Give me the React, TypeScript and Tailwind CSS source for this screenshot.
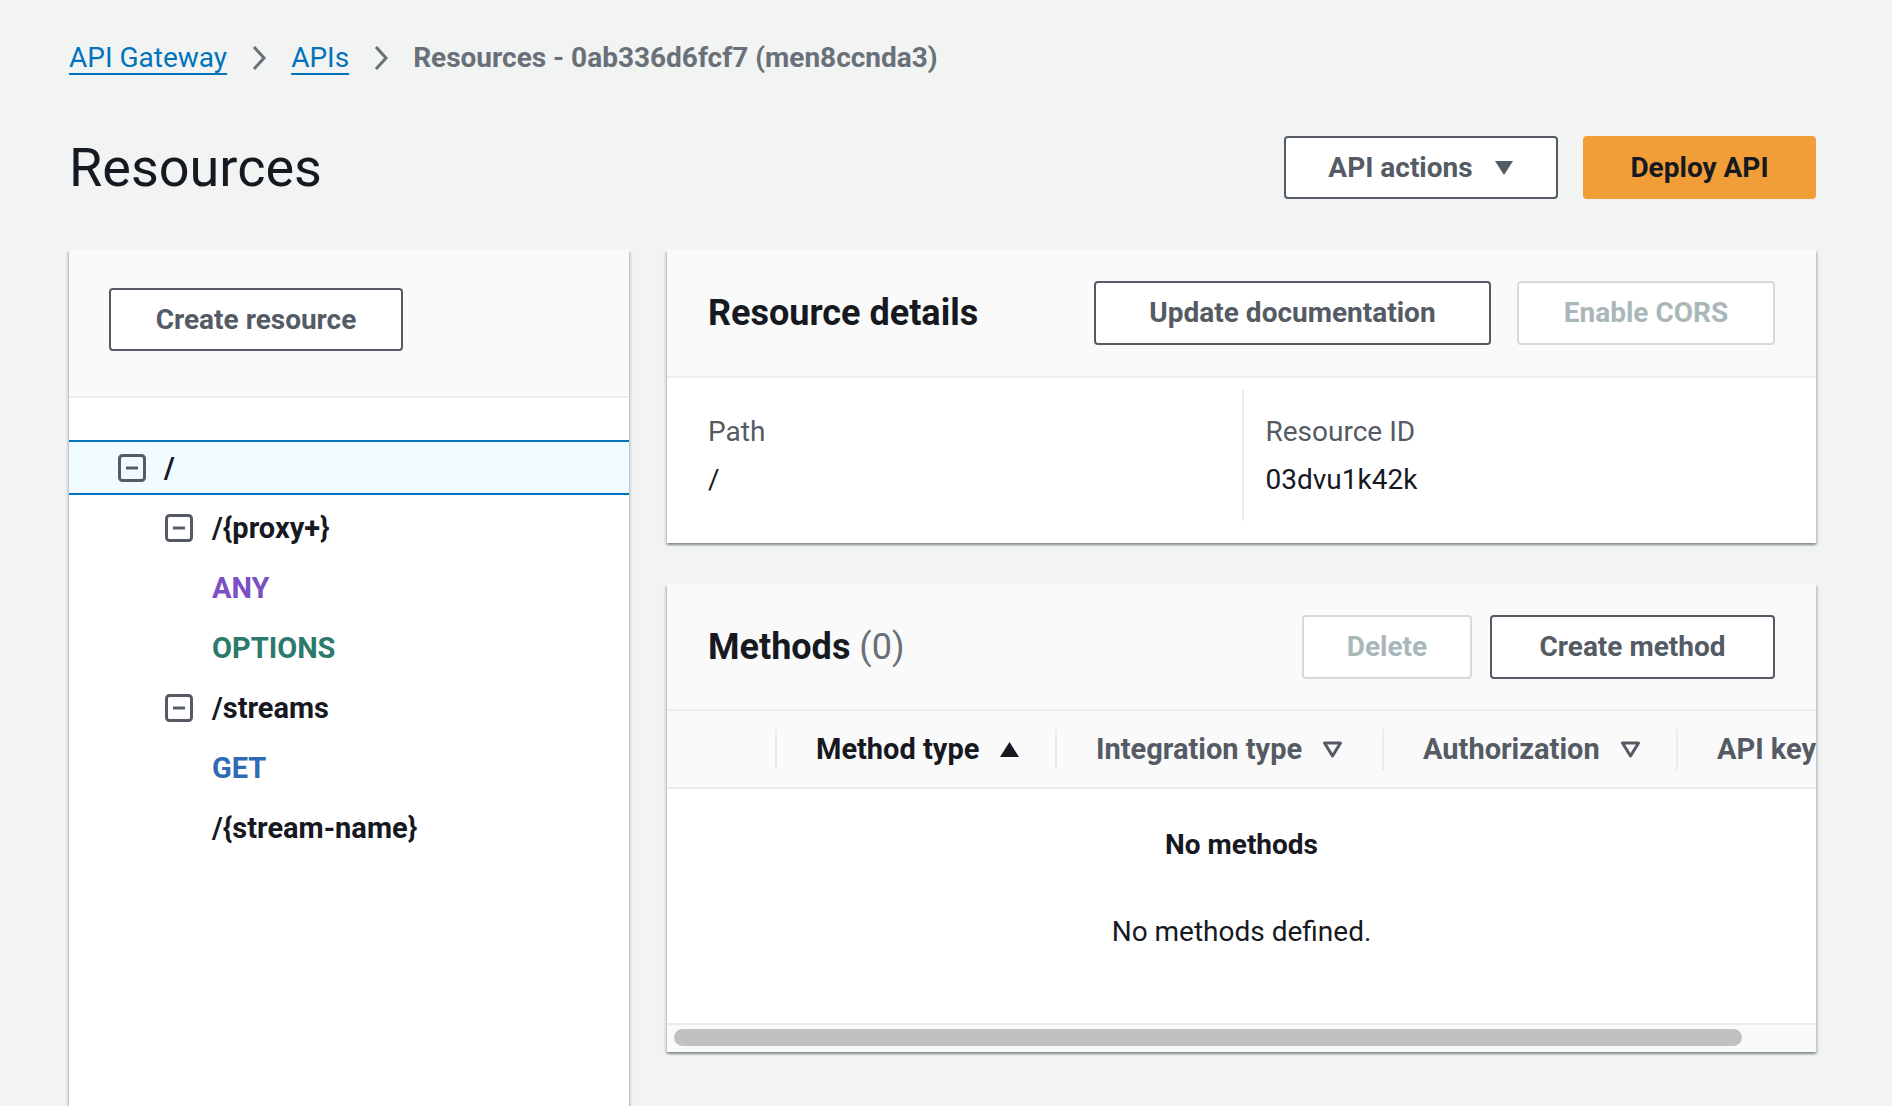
function Chevron() {
  return (
    <svg width="18" height="28" viewBox="0 0 18 28" fill="none" className="shrink-0">
      <path d="M4 3l10 11L4 25" stroke="#687078" strokeWidth="3" />
    </svg>
  );
}

function Caret() {
  return (
    <svg width="20" height="16" viewBox="0 0 20 16" className="shrink-0">
      <path d="M1 1h18L10 15z" fill="#545b64" />
    </svg>
  );
}

function SortUp() {
  return (
    <svg width="21" height="17" viewBox="0 0 21 17" className="shrink-0">
      <path d="M10.5 1L20 16H1z" fill="#16191f" />
    </svg>
  );
}

function SortDown() {
  return (
    <svg width="21" height="17" viewBox="0 0 21 17" fill="none" className="shrink-0">
      <path d="M2.5 2h16L10.5 15z" stroke="#545b64" strokeWidth="3" strokeLinejoin="round" />
    </svg>
  );
}

function Collapse() {
  return (
    <svg width="28" height="28" viewBox="0 0 28 28" fill="none" className="shrink-0">
      <rect x="1.5" y="1.5" width="25" height="25" rx="3" stroke="#545b64" strokeWidth="3" />
      <path d="M8 14h12" stroke="#545b64" strokeWidth="3" />
    </svg>
  );
}

function Button({ children, width, disabled }: { children: React.ReactNode; width: string; disabled?: boolean }) {
  return (
    <button
      className={
        "h-[64px] rounded-[4px] border-2 bg-white text-[28px] font-bold flex items-center justify-center " +
        width +
        (disabled ? " border-[#d5dbdb] text-[#aab7b8]" : " border-[#545b64] text-[#545b64]")
      }
    >
      {children}
    </button>
  );
}

function HeaderCell({ label, width, active }: { label: string; width: string; active?: boolean }) {
  return (
    <div className={"flex items-center shrink-0 " + width}>
      <div className="h-[41px] w-[2px] bg-[#eaeded]" />
      <span className={"pl-[39px] whitespace-nowrap " + (active ? "text-[#16191f]" : "text-[#545b64]")}>{label}</span>
      {label !== "API key" && <span className="ml-[20px]">{active ? <SortUp /> : <SortDown />}</span>}
    </div>
  );
}

const card =
  "bg-white shadow-[0_2px_2px_0_rgba(0,28,36,0.3),2px_2px_2px_0_rgba(0,28,36,0.12),-2px_2px_2px_0_rgba(0,28,36,0.12)]";

export default function App() {
  return (
    <div className="min-h-[1106px] h-[1106px] overflow-hidden bg-[#f2f3f3] pl-[69px] pr-[76px] text-[#16191f] [font-family:Roboto,'Noto_Sans',sans-serif]">
      {/* breadcrumb */}
      <nav className="pt-[38px] h-[78px] flex items-center gap-[23px] text-[28px] leading-[40px]">
        <a className="text-[#0073bb] underline decoration-2 underline-offset-[6px]">API Gateway</a>
        <Chevron />
        <a className="text-[#0073bb] underline decoration-2 underline-offset-[6px]">APIs</a>
        <Chevron />
        <span className="font-bold text-[#687078]">Resources - 0ab336d6fcf7 (men8ccnda3)</span>
      </nav>

      {/* page header */}
      <div className="mt-[58px] h-[63px] flex items-center justify-between">
        <h1 className="text-[54px] leading-[63px] font-normal">Resources</h1>
        <div className="flex items-center gap-[25px]">
          <button className="h-[63px] w-[274px] rounded-[4px] border-2 border-[#545b64] bg-white text-[28px] font-bold text-[#545b64] flex items-center justify-center gap-[21px]">
            API actions
            <Caret />
          </button>
          <button className="h-[63px] w-[233px] rounded-[4px] bg-[#f19e39] text-[28px] font-bold text-[#16191f]">
            Deploy API
          </button>
        </div>
      </div>

      <div className="mt-[51px] flex gap-[38px] items-start">
        {/* resource tree */}
        <aside className={"w-[560px] h-[900px] shrink-0 " + card}>
          <div className="h-[148px] bg-[#fafafa] border-b-2 border-[#eaeded] pl-[40px] pt-[38px]">
            <Button width="w-[294px] !h-[63px]">Create resource</Button>
          </div>
          <div className="pt-[42px] text-[29px] font-bold leading-[40px]">
            <div className="h-[55px] mb-[3px] border-y-2 border-[#0073bb] bg-[#f1faff] flex items-center pl-[49px] gap-[18px]">
              <Collapse />
              <span>/</span>
            </div>
            <div className="h-[60px] flex items-center pl-[96px] gap-[19px]">
              <Collapse />
              <span>/{"{proxy+}"}</span>
            </div>
            <div className="h-[60px] flex items-center pl-[143px] text-[#7d4fc4]">ANY</div>
            <div className="h-[60px] flex items-center pl-[143px] text-[#2b7a6b]">OPTIONS</div>
            <div className="h-[60px] flex items-center pl-[96px] gap-[19px]">
              <Collapse />
              <span>/streams</span>
            </div>
            <div className="h-[60px] flex items-center pl-[143px] text-[#2e6bb3]">GET</div>
            <div className="h-[60px] flex items-center pl-[143px]">/{"{stream-name}"}</div>
          </div>
        </aside>

        <div className="flex-1 min-w-0 flex flex-col gap-[41px]">
          {/* resource details */}
          <section className={card}>
            <div className="h-[128px] bg-[#fafafa] border-b-2 border-[#eaeded] flex items-center justify-between px-[41px]">
              <h2 className="text-[36px] font-bold leading-[44px]">Resource details</h2>
              <div className="flex items-center gap-[26px]">
                <Button width="w-[397px]">Update documentation</Button>
                <Button width="w-[258px]" disabled>
                  Enable CORS
                </Button>
              </div>
            </div>
            <div className="grid grid-cols-2 px-[41px] pt-[12px] pb-[22px] text-[28px] leading-[40px]">
              <div className="h-[131px] pt-[22px]">
                <div className="text-[#545b64]">Path</div>
                <div className="mt-[8px]">/</div>
              </div>
              <div className="h-[131px] pt-[22px] pl-[22px] border-l-2 border-[#eaeded]">
                <div className="text-[#545b64]">Resource ID</div>
                <div className="mt-[8px]">03dvu1k42k</div>
              </div>
            </div>
          </section>

          {/* methods */}
          <section className={"overflow-hidden " + card}>
            <div className="h-[127px] bg-[#fafafa] border-b-2 border-[#eaeded] flex items-center justify-between px-[41px]">
              <h2 className="text-[36px] font-bold leading-[44px]">
                Methods <span className="font-normal text-[#687078]">(0)</span>
              </h2>
              <div className="flex items-center gap-[18px]">
                <Button width="w-[170px]" disabled>
                  Delete
                </Button>
                <Button width="w-[285px]">Create method</Button>
              </div>
            </div>
            <div className="h-[78px] bg-[#fafafa] border-b-2 border-[#eaeded] flex items-center text-[29px] font-bold leading-[40px] overflow-hidden">
              <div className="w-[108px] shrink-0" />
              <HeaderCell label="Method type" width="w-[280px]" active />
              <HeaderCell label="Integration type" width="w-[327px]" />
              <HeaderCell label="Authorization" width="w-[294px]" />
              <HeaderCell label="API key" width="w-[200px]" />
            </div>
            <div className="h-[234px] text-center text-[28px] leading-[40px] pt-[36px]">
              <div className="font-bold">No methods</div>
              <div className="mt-[47px]">No methods defined.</div>
            </div>
            <div className="h-[29px] border-t-2 border-[#eaeded] bg-[#fafafa] pl-[7px] pt-[4px]">
              <div className="h-[17px] w-[1068px] rounded-full bg-[#c1c1c1]" />
            </div>
          </section>
        </div>
      </div>
    </div>
  );
}
